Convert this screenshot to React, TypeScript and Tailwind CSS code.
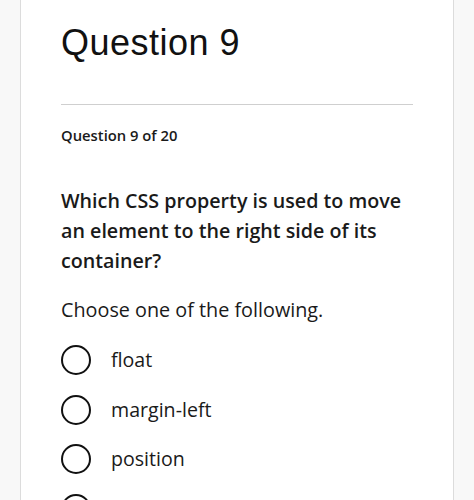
import React from "react";

export default function App() {
  const options = ["float", "margin-left", "position", "align"];
  return (
    <div className="min-h-screen bg-[#f8f8f8] flex justify-center">
      <div className="w-[434px] bg-white border-x border-[#dcdcdc] px-[40px] pt-[20px] pb-10">
        <h1 className="text-[36px] leading-[46px] text-[#111] font-['Liberation_Sans',sans-serif] tracking-[0.5px]">
          Question 9
        </h1>
        <div className="mt-[38px] h-px bg-[#cfcfcf]" />
        <p className="mt-[19px] text-[14.8px] leading-[22px] font-semibold text-[#1a1a1a] font-['Open_Sans',sans-serif]">
          Question 9 of 20
        </p>
        <p className="mt-[40px] text-[19.7px] leading-[30px] font-semibold text-[#1a1a1a] font-['Open_Sans',sans-serif]">
          Which CSS property is used to move an element to the right side of its container?
        </p>
        <p className="mt-[19px] text-[19.8px] leading-[30px] text-[#1a1a1a] font-['Open_Sans',sans-serif]">
          Choose one of the following.
        </p>
        <div className="mt-[20px] flex flex-col gap-[19.5px]">
          {options.map((o) => (
            <label key={o} className="flex items-center gap-[20px] h-[30px]">
              <span className="w-[30px] h-[30px] rounded-full border-2 border-[#111] shrink-0" />
              <span className="text-[19.6px] leading-[30px] text-[#1a1a1a] font-['Open_Sans',sans-serif]">{o}</span>
            </label>
          ))}
        </div>
      </div>
    </div>
  );
}
